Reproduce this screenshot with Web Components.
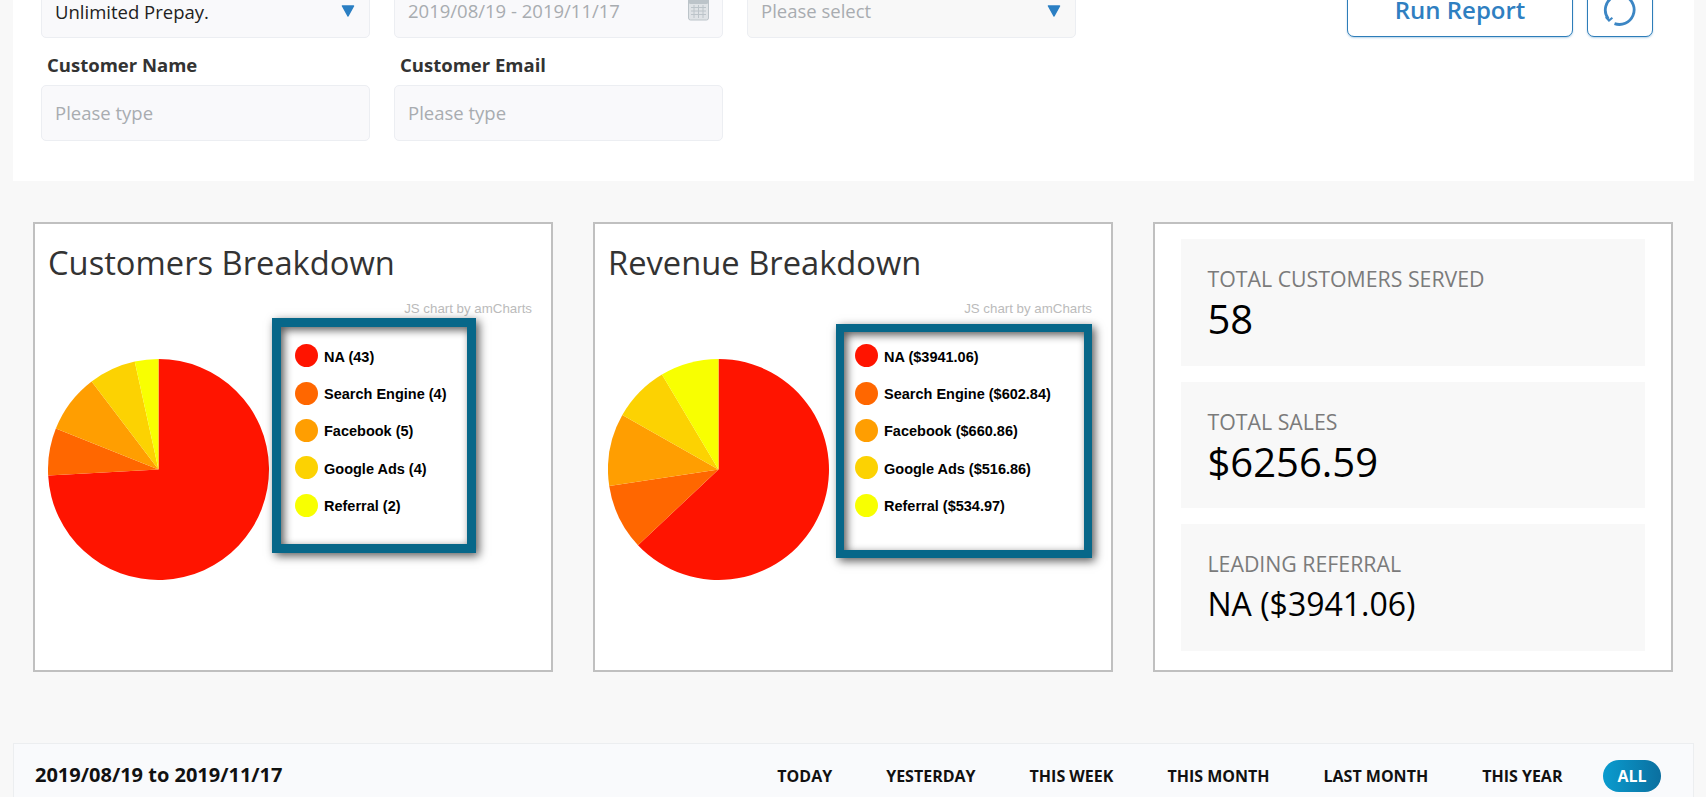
<!DOCTYPE html>
<html lang="en">
<head>
<meta charset="utf-8">
<title>Sales Report</title>
<style>
  html, body { margin: 0; height: 797px; overflow: hidden; background: #f8f8f8; }
  body { font-family: "Open Sans", "Liberation Sans", sans-serif; }
  report-page { width: 1706px; }
</style>
</head>
<body>
<report-page>
  <filter-panel>
    <form-field slot="top" kind="select" value="Unlimited Prepay."></form-field>
    <form-field slot="top" kind="date" placeholder="2019/08/19 - 2019/11/17"></form-field>
    <form-field slot="top" kind="select" placeholder="Please select" tone="dim"></form-field>
    <form-field slot="bottom" label="Customer Name" placeholder="Please type"></form-field>
    <form-field slot="bottom" label="Customer Email" placeholder="Please type"></form-field>
  </filter-panel>

  <div id="cards" style="display:grid;grid-template-columns:repeat(3,520px);gap:40px;padding:41px 0 0 33px">
    <chart-card heading="Customers Breakdown"
      values="43,4,5,4,2"
      labels="NA (43)|Search Engine (4)|Facebook (5)|Google Ads (4)|Referral (2)"
      legend-style="--gap:3px;--top:0px;--w:204px;--h:235px;--bw:9px;--pl:14px;--pt:10px"></chart-card>
    <chart-card heading="Revenue Breakdown"
      values="3941.06,602.84,660.86,516.86,534.97"
      labels="NA ($3941.06)|Search Engine ($602.84)|Facebook ($660.86)|Google Ads ($516.86)|Referral ($534.97)"
      legend-style="--gap:7px;--top:6px;--w:259.6px;--h:233.7px;--bw:8px;--pl:11px;--pt:5px"></chart-card>
    <stat-card>
      <stat-tile label="TOTAL CUSTOMERS SERVED" value="58"></stat-tile>
      <stat-tile label="TOTAL SALES" value="$6256.59"></stat-tile>
      <stat-tile label="LEADING REFERRAL" value="NA ($3941.06)" small></stat-tile>
    </stat-card>
  </div>

  <range-bar range="2019/08/19 to 2019/11/17" tabs="TODAY,YESTERDAY,THIS WEEK,THIS MONTH,LAST MONTH,THIS YEAR,ALL" active="ALL"></range-bar>
</report-page>

<script>
class ReportPage extends HTMLElement {
  constructor() {
    super();
    this.attachShadow({ mode: 'open' });
    this.shadowRoot.innerHTML = `
      <style>:host { display: block; }</style>
      <slot></slot>
    `;
  }
}

class FilterPanel extends HTMLElement {
  constructor() {
    super();
    this.attachShadow({ mode: 'open' });
    this.shadowRoot.innerHTML = `
      <style>
        :host {
          display: block;
          width: 1680.6px;
          margin: -40px 0 0 13px;
          padding: 22px 0 40px;
          background: #fff;
        }
        .row { display: flex; padding-left: 28px; }
        .grid { display: flex; gap: 24.5px; }
        .actions { margin-left: auto; padding-right: 40.6px; display: flex; gap: 14px; }
        button {
          height: 55px;
          background: #fff;
          border: 1.5px solid #2d7db9;
          border-radius: 7px;
          box-shadow: 0 1px 2px rgba(45, 125, 185, .35);
          color: #2f7fc1;
          font: 600 24px "Open Sans", sans-serif;
          padding: 0;
          display: flex;
          align-items: center;
          justify-content: center;
        }
        .run { width: 226px; }
        .reload { width: 66px; }
        svg { display: block; }
      </style>
      <div class="row">
        <div class="grid"><slot name="top"></slot></div>
        <div class="actions">
          <button class="run">Run Report</button>
          <button class="reload" aria-label="Reset">
            <svg width="34" height="34" viewBox="0 0 34 34" fill="none" stroke="#3c86c4" stroke-width="2.8">
              <path d="M11 3.6 A14.7 14.7 0 0 0 5.4 26"/>
              <path d="M23 3.6 A14.7 14.7 0 0 1 11.5 30.6"/>
              <path d="M2.8 24 L6 27.6 L9.4 24.8" stroke-width="2"/>
            </svg>
          </button>
        </div>
      </div>
      <div class="row"><div class="grid"><slot name="bottom"></slot></div></div>
    `;
  }
}

class FormField extends HTMLElement {
  constructor() {
    super();
    this.attachShadow({ mode: 'open' });
  }

  connectedCallback() {
    const label = this.getAttribute('label');
    const value = this.getAttribute('value');
    const placeholder = this.getAttribute('placeholder');
    const kind = this.getAttribute('kind');
    let icon = '';
    if (kind === 'select') {
      icon = `<svg width="14" height="12" viewBox="0 0 14 12" style="margin-top:7px"><path d="M1.5 1 H12.5 L7 11 Z" fill="#2b7fc3" stroke="#2b7fc3" stroke-width="1.5" stroke-linejoin="round"/></svg>`;
    } else if (kind === 'date') {
      icon = `<svg width="21" height="27" viewBox="0 0 21 27" style="margin-top:-4px">
        <rect x=".5" y="4" width="20" height="22" rx="2" fill="#dfe3e6" stroke="#bcc4c9"/>
        <rect x=".5" y="4" width="20" height="6" rx="2" fill="#bcc4c9"/>
        <rect x="5" y="0" width="2" height="7" fill="#bcc4c9"/><rect x="14" y="0" width="2" height="7" fill="#bcc4c9"/>
        <path d="M3 13.5 H18 M3 17 H18 M3 20.5 H18 M6 11 V24 M10.5 11 V24 M15 11 V24" stroke="#bcc4c9" stroke-width="1"/>
      </svg>`;
    }
    this.shadowRoot.innerHTML = `
      <style>
        :host { display: block; width: 328.5px; }
        .label {
          height: 47px;
          box-sizing: border-box;
          padding: 14px 0 0 6px;
          font-size: 18.5px;
          line-height: 26px;
          font-weight: 700;
          color: #333;
        }
        .box {
          height: 56px;
          box-sizing: border-box;
          background: ${this.getAttribute('tone') === 'dim' ? '#f8f8f8' : '#f9f9fb'};
          border: 1px solid #eceef2;
          border-radius: 5px;
          padding: 0 ${kind === 'date' ? 13 : 14}px 1px 13px;
          display: flex;
          align-items: center;
          justify-content: space-between;
          font-size: 18.5px;
        }
        .box span { color: #a8acb0; }
        .box span.filled { color: #222; position: relative; top: 1px; }
        :host([kind]) .box { align-items: flex-start; padding-top: 14.5px; }
      </style>
      ${label ? `<div class="label">${label}</div>` : ''}
      <div class="box">
        <span class="${value ? 'filled' : ''}">${value || placeholder || ''}</span>
        ${icon}
      </div>
    `;
  }
}

class PieChart extends HTMLElement {
  constructor() {
    super();
    this.attachShadow({ mode: 'open' });
  }

  connectedCallback() {
    const colors = ['#ff1400', '#ff6700', '#ff9e01', '#fcd202', '#f8ff01'];
    const values = this.getAttribute('values').split(',').map(Number);
    const total = values.reduce((a, b) => a + b, 0);
    const r = 110.5;
    let angle = 0;
    let paths = '';
    values.forEach((v, i) => {
      const sweep = (v / total) * Math.PI * 2;
      const x1 = r + r * Math.sin(angle);
      const y1 = r - r * Math.cos(angle);
      angle += sweep;
      const x2 = r + r * Math.sin(angle);
      const y2 = r - r * Math.cos(angle);
      const large = sweep > Math.PI ? 1 : 0;
      paths += `<path fill="${colors[i]}" d="M${r} ${r} L${x1} ${y1} A${r} ${r} 0 ${large} 1 ${x2} ${y2} Z"/>`;
    });
    this.shadowRoot.innerHTML = `
      <style>:host { display: block; width: 221px; height: 221px; } svg { display: block; }</style>
      <svg width="221" height="221" viewBox="0 0 221 221">${paths}</svg>
    `;
  }
}

class ChartLegend extends HTMLElement {
  constructor() {
    super();
    this.attachShadow({ mode: 'open' });
  }

  connectedCallback() {
    const colors = ['#ff1400', '#ff6700', '#ff9e01', '#fcd202', '#f8ff01'];
    const items = this.getAttribute('labels').split('|');
    this.shadowRoot.innerHTML = `
      <style>
        :host {
          display: block;
          box-sizing: border-box;
          width: var(--w);
          height: var(--h);
          margin: var(--top) 0 0 var(--gap);
          border: var(--bw) solid #076789;
          background: #fff;
          padding: var(--pt) 0 0 var(--pl);
          box-shadow: 3px 3px 9px rgba(0, 0, 0, .65), inset 3px 3px 9px rgba(0, 0, 0, .65);
          font: 700 14.5px "Liberation Sans", Arial, sans-serif;
          color: #000;
        }
        .item { height: 37.4px; display: flex; align-items: center; gap: 6px; white-space: nowrap; }
        i { width: 23px; height: 23px; border-radius: 50%; flex: none; }
        span { position: relative; top: 1px; }
      </style>
      ${items.map((t, i) => `<div class="item"><i style="background:${colors[i]}"></i><span>${t}</span></div>`).join('')}
    `;
  }
}

class ChartCard extends HTMLElement {
  constructor() {
    super();
    this.attachShadow({ mode: 'open' });
  }

  connectedCallback() {
    this.shadowRoot.innerHTML = `
      <style>
        :host {
          display: block;
          height: 450px;
          box-sizing: border-box;
          background: #fff;
          border: 2px solid #c0c0c0;
          padding: 17px 19px 0 13px;
        }
        h2 { margin: 0; font-size: 32.7px; line-height: 44px; font-weight: 400; color: #333; }
        .credit {
          margin-top: 16px;
          text-align: right;
          font: 13.3px/16px "Liberation Sans", Arial, sans-serif;
          color: #bbb;
        }
        .body { display: flex; align-items: flex-start; margin-top: 1px; }
        pie-chart { margin-top: 40.5px; }
      </style>
      <h2>${this.getAttribute('heading')}</h2>
      <div class="credit">JS chart by amCharts</div>
      <div class="body">
        <pie-chart values="${this.getAttribute('values')}"></pie-chart>
        <chart-legend labels="${this.getAttribute('labels')}" style="${this.getAttribute('legend-style')}"></chart-legend>
      </div>
    `;
  }
}

class StatCard extends HTMLElement {
  constructor() {
    super();
    this.attachShadow({ mode: 'open' });
    this.shadowRoot.innerHTML = `
      <style>
        :host {
          display: flex;
          flex-direction: column;
          gap: 16px;
          height: 450px;
          box-sizing: border-box;
          background: #fff;
          border: 2px solid #c0c0c0;
          padding: 15px 26px 0 26px;
        }
      </style>
      <slot></slot>
    `;
  }
}

class StatTile extends HTMLElement {
  constructor() {
    super();
    this.attachShadow({ mode: 'open' });
  }

  connectedCallback() {
    this.shadowRoot.innerHTML = `
      <style>
        :host {
          display: block;
          height: 126.5px;
          box-sizing: border-box;
          background: #f8f8f8;
          padding: 26px 0 0 26.5px;
        }
        .label { font-size: 21.3px; line-height: 28px; color: #7b7b7b; }
        .value { font-size: 40px; line-height: 51px; color: #000; }
        :host([small]) .value { font-size: 32px; }
      </style>
      <div class="label">${this.getAttribute('label')}</div>
      <div class="value">${this.getAttribute('value')}</div>
    `;
  }
}

class RangeBar extends HTMLElement {
  constructor() {
    super();
    this.attachShadow({ mode: 'open' });
  }

  connectedCallback() {
    const active = this.getAttribute('active');
    const tabs = this.getAttribute('tabs').split(',');
    this.shadowRoot.innerHTML = `
      <style>
        :host {
          display: flex;
          align-items: flex-start;
          justify-content: space-between;
          box-sizing: border-box;
          width: 1680.6px;
          height: 80px;
          margin: 71px 0 0 13px;
          padding: 16px 32px 0 21px;
          background: #f9fafc;
          border: 1px solid #eceef0;
        }
        .range { font-size: 20px; font-weight: 700; line-height: 30px; color: #111; }
        .tabs { display: flex; gap: 24px; }
        .tab {
          height: 32px;
          padding: 0 15px;
          border-radius: 16px;
          font-size: 16px;
          font-weight: 700;
          line-height: 32px;
          color: #111;
        }
        .tab.on {
          padding: 0 14px;
          margin-left: 2px;
          color: #fff;
          background: linear-gradient(90deg, #0a9ccf, #0b6f9f);
        }
      </style>
      <div class="range">${this.getAttribute('range')}</div>
      <div class="tabs">${tabs.map(t => `<div class="tab${t === active ? ' on' : ''}">${t}</div>`).join('')}</div>
    `;
  }
}

customElements.define('report-page', ReportPage);
customElements.define('filter-panel', FilterPanel);
customElements.define('form-field', FormField);
customElements.define('pie-chart', PieChart);
customElements.define('chart-legend', ChartLegend);
customElements.define('chart-card', ChartCard);
customElements.define('stat-card', StatCard);
customElements.define('stat-tile', StatTile);
customElements.define('range-bar', RangeBar);
</script>
</body>
</html>
